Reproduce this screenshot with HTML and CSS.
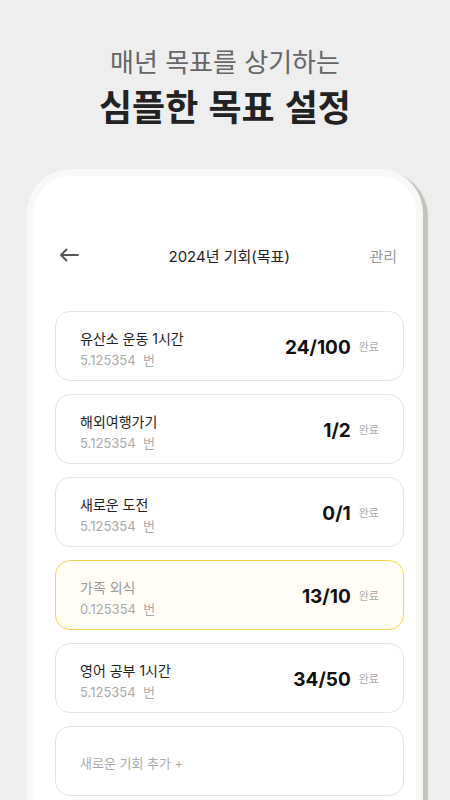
FILE: index.html
```html
<!DOCTYPE html>
<html lang="ko">
<head>
  <meta charset="UTF-8">
  <title>심플한 목표 설정</title>
  <link rel="stylesheet" href="styles.css">
</head>
<body>
  <!-- 상단 홍보 문구 -->
  <header class="promo">
    <p class="promo-sub">매년 목표를 상기하는</p>
    <h1 class="promo-title">심플한 목표 설정</h1>
  </header>

  <!-- 폰 프레임 -->
  <div class="phone">
    <div class="screen">
      <div class="nav">
        <svg class="back" width="20" height="14" viewBox="0 0 20 14">
          <path d="M19 7H2M7.5 1.5L2 7l5.5 5.5" fill="none" stroke="#555" stroke-width="1.8" stroke-linecap="round" stroke-linejoin="round"/>
        </svg>
        <span class="nav-title">2024년 기회(목표)</span>
        <span class="nav-action">관리</span>
      </div>

      <div class="goal-list">
        <div class="goal">
          <div class="goal-info">
            <div class="goal-name">유산소 운동 1시간</div>
            <div class="goal-rate">5.125354 &nbsp;번</div>
          </div>
          <div class="goal-count">24/100</div>
          <div class="goal-done">완료</div>
        </div>
        <div class="goal">
          <div class="goal-info">
            <div class="goal-name">해외여행가기</div>
            <div class="goal-rate">5.125354 &nbsp;번</div>
          </div>
          <div class="goal-count">1/2</div>
          <div class="goal-done">완료</div>
        </div>
        <div class="goal">
          <div class="goal-info">
            <div class="goal-name">새로운 도전</div>
            <div class="goal-rate">5.125354 &nbsp;번</div>
          </div>
          <div class="goal-count">0/1</div>
          <div class="goal-done">완료</div>
        </div>
        <div class="goal goal-complete">
          <div class="goal-info">
            <div class="goal-name">가족 외식</div>
            <div class="goal-rate">0.125354 &nbsp;번</div>
          </div>
          <div class="goal-count">13/10</div>
          <div class="goal-done">완료</div>
        </div>
        <div class="goal">
          <div class="goal-info">
            <div class="goal-name">영어 공부 1시간</div>
            <div class="goal-rate">5.125354 &nbsp;번</div>
          </div>
          <div class="goal-count">34/50</div>
          <div class="goal-done">완료</div>
        </div>
        <div class="goal goal-add">새로운 기회 추가 +</div>
      </div>
    </div>
  </div>
</body>
</html>
```

FILE: styles.css
```css
/* 기본 */
html {
  overflow: hidden;
}
body {
  margin: 0;
  background: #eeeeee;
  font-family: Inter, "Noto Sans CJK KR", sans-serif;
  color: #222;
  overflow: hidden;
  height: 800px;
}

/* 홍보 문구 */
.promo {
  text-align: center;
  padding-top: 42px;
  font-family: "Noto Sans CJK KR", sans-serif;
}
.promo-sub {
  margin: 0;
  font-size: 26px;
  line-height: 38px;
  font-weight: 400;
  color: #666;
}
.promo-title {
  margin: 0;
  font-size: 36px;
  line-height: 50px;
  font-weight: 700;
  color: #222;
}

/* 폰 프레임 (화면 아래로 잘려 나감) */
.phone {
  margin: 39px 0 0 27px;
  width: 382px;
  height: 624px;
  border: 7px solid #f8f8f6;
  border-bottom: none;
  border-radius: 44px 44px 0 0;
  background: #fff;
  box-shadow: 5px 3px 1px #c3c3bc;
}
.screen {
  padding: 68px 12px 0 21px;
}

/* 상단 내비게이션 */
.nav {
  display: flex;
  align-items: center;
  justify-content: space-between;
  height: 22px;
  padding: 0 7px 0 4px;
}
.back {
  display: block;
}
.nav-title {
  font-size: 15px;
  color: #222;
  margin-left: 10px;
}
.nav-action {
  font-size: 15px;
  color: #999;
}

/* 목표 카드 */
.goal-list {
  display: flex;
  flex-direction: column;
  gap: 13px;
  margin-top: 45px;
}
.goal {
  display: flex;
  align-items: center;
  height: 70px;
  box-sizing: border-box;
  padding: 0 24px;
  border: 1px solid #e0e4ee;
  border-radius: 15px;
  background: #fff;
}
.goal-info {
  flex: 1;
  padding-top: 6px;
}
.goal-name {
  font-size: 14px;
  line-height: 20px;
  color: #222;
}
.goal-rate {
  font-size: 13px;
  line-height: 20px;
  color: #aaa;
  margin-top: 1px;
}
.goal-count {
  font-size: 19px;
  font-weight: 700;
  color: #111;
  margin-top: 3px;
}
.goal-done {
  font-size: 11px;
  color: #aaa;
  margin-left: 8px;
}
.goal-complete {
  background: #fffdf6;
  border-color: #f8d449;
}
.goal-complete .goal-name {
  color: #999;
}
.goal-add {
  font-size: 13px;
  color: #aaa;
  padding-top: 2px;
}
```
